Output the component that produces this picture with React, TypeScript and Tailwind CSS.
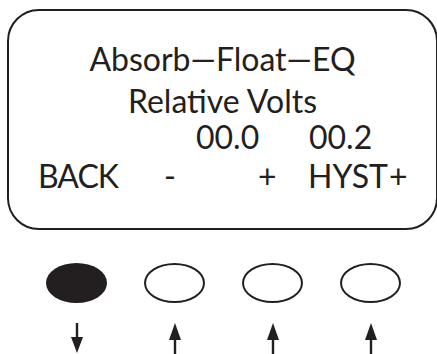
const Arrow = ({ up }: { up: boolean }) => (
  <svg width="16" height="31" viewBox="0 0 16 31" className="block">
    {up ? (
      <>
        <path d="M8 0 L14 17 L2 17 Z" fill="#231f20" />
        <rect x="6.8" y="15" width="2.4" height="16" fill="#231f20" />
      </>
    ) : (
      <>
        <rect x="6.8" y="0" width="2.4" height="16" fill="#231f20" />
        <path d="M8 30 L14 14 L2 14 Z" fill="#231f20" />
      </>
    )}
  </svg>
);

const buttons = [true, false, false, false];

const App = () => {
  return (
    <div
      className="w-[437px] h-[354px] overflow-hidden bg-white text-[#231f20]"
      style={{ fontFamily: "Lato, 'Open Sans', sans-serif" }}
    >
      {/* display */}
      <div className="ml-[7px] mt-[9px] w-[431px] h-[221px] border-2 border-[#231f20] rounded-[32px] pt-[28px] text-[32px] leading-[39px] whitespace-nowrap">
        <div className="text-center">Absorb—Float—EQ</div>
        <div className="text-center pt-[3px] -mb-[3px]">Relative Volts</div>
        <div className="grid grid-cols-[187px_113px_1fr]">
          <span />
          <span>00.0</span>
          <span>00.2</span>
        </div>
        <div className="grid grid-cols-[29px_126px_94px_50px_1fr]">
          <span />
          <span className="tracking-[-1px]">BACK</span>
          <span>-</span>
          <span>+</span>
          <span>
            HYST<span className="ml-[1px]">+</span>
          </span>
        </div>
      </div>

      {/* keys */}
      <div className="flex gap-[37px] pl-[46px] mt-[33px]">
        {buttons.map((filled, i) => (
          <div key={i} className="flex flex-col items-center w-[61px]">
            <div
              className={
                filled
                  ? "w-[61px] h-[40px] rounded-[50%] bg-[#231f20]"
                  : "w-[61px] h-[40px] rounded-[50%] border-[2.5px] border-[#231f20] bg-white"
              }
            />
            <div className="mt-[20px]">
              <Arrow up={!filled} />
            </div>
          </div>
        ))}
      </div>
    </div>
  );
};

export default App;
